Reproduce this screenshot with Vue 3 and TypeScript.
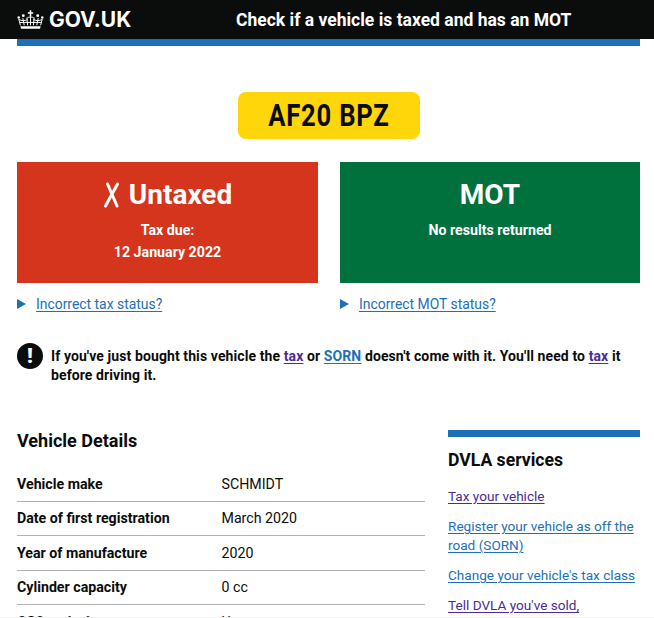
<script setup lang="ts">
interface Detail {
  label: string
  value: string
}

interface ServiceLink {
  text: string
  visited: boolean
}

const details: Detail[] = [
  { label: 'Vehicle make', value: 'SCHMIDT' },
  { label: 'Date of first registration', value: 'March 2020' },
  { label: 'Year of manufacture', value: '2020' },
  { label: 'Cylinder capacity', value: '0 cc' },
  { label: 'CO2 emissions', value: 'Use a new message' }
]

const services: ServiceLink[] = [
  { text: 'Tax your vehicle', visited: true },
  { text: 'Register your vehicle as off the road (SORN)', visited: false },
  { text: "Change your vehicle's tax class", visited: false },
  { text: "Tell DVLA you've sold, transferred or bought a vehicle", visited: true }
]
</script>

<template>
  <div class="page">
    <header class="topbar">
      <div class="logo">
        <svg class="crown" viewBox="0 0 28 20" aria-hidden="true">
          <path
            fill="none"
            stroke="#fff"
            stroke-width="1"
            d="M3.500 15.500 1.800 9M24.500 15.500 26.200 9M7.500 15.500 6 8M20.500 15.500 22 8M11 15.500l-.8-8M17 15.500l.8-8M14 15.500V6M3 12.500h22M2 9.500c3 1.500 6 1.500 9 0M17 9.500c3 1.500 6 1.500 9 0M10.500 8c1-1.500 6-1.500 7 0"
          />
          <path fill="#fff" d="M13.200 0h1.600v2h2v1.500h-2V6h-1.600V3.500h-2V2h2zM3.500 16.500h21l-.6 2.500H4.100z" />
          <circle cx="6.500" cy="5.500" r="1.500" fill="#fff" />
          <circle cx="21.500" cy="5.500" r="1.500" fill="#fff" />
          <circle cx="1.800" cy="7.500" r="1.300" fill="#fff" />
          <circle cx="26.200" cy="7.500" r="1.300" fill="#fff" />
        </svg>
        <span>GOV.UK</span>
      </div>
      <div class="service-name">Check if a vehicle is taxed and has an MOT</div>
    </header>

    <main class="content">
      <div class="blue-rule"></div>

      <div class="plate-wrap">
        <div class="plate"><span>AF20 BPZ</span></div>
      </div>

      <div class="status-grid">
        <section class="status-col">
          <div class="status-card red">
            <h2>
              <svg class="cross" viewBox="0 0 18 26" aria-hidden="true">
                <path fill="none" stroke="#fff" stroke-width="3" stroke-linecap="round" d="M4.500 2 14 24M14.500 2 2.500 24" />
              </svg>
              Untaxed
            </h2>
            <p>Tax due:</p>
            <p>12 January 2022</p>
          </div>
          <div class="status-link">
            <span class="arrow"></span>
            <a href="#">Incorrect tax status?</a>
          </div>
        </section>
        <section class="status-col">
          <div class="status-card green">
            <h2>MOT</h2>
            <p>No results returned</p>
          </div>
          <div class="status-link">
            <span class="arrow"></span>
            <a href="#">Incorrect MOT status?</a>
          </div>
        </section>
      </div>

      <div class="warning">
        <span class="warning-icon">!</span>
        <p>
          If you've just bought this vehicle the <a href="#" class="visited">tax</a> or
          <a href="#">SORN</a> doesn't come with it. You'll need to
          <a href="#" class="visited">tax</a> it before driving it.
        </p>
      </div>

      <div class="lower">
        <section class="details">
          <h2>Vehicle Details</h2>
          <dl>
            <div v-for="row in details" :key="row.label" class="detail-row">
              <dt>{{ row.label }}</dt>
              <dd>{{ row.value }}</dd>
            </div>
          </dl>
        </section>
        <aside class="sidebar">
          <h2>DVLA services</h2>
          <ul>
            <li v-for="link in services" :key="link.text">
              <a href="#" :class="{ visited: link.visited }">{{ link.text }}</a>
            </li>
          </ul>
        </aside>
      </div>
    </main>

    <div class="bottom-edge"></div>
  </div>
</template>

<style>
html,
body {
  margin: 0;
  overflow: hidden;
  background: #fff;
}
</style>

<style scoped>
.page {
  position: relative;
  width: 654px;
  height: 618px;
  overflow: hidden;
  font-family: Roboto, "Liberation Sans", sans-serif;
  color: #0b0c0c;
  background: #fff;
}

.topbar {
  display: flex;
  align-items: center;
  height: 39px;
  padding-left: 17px;
  background: #0b0c0c;
  color: #fff;
}

.logo {
  display: flex;
  align-items: center;
  gap: 5px;
  width: 219px;
  font-family: Inter, sans-serif;
  font-size: 21px;
  font-weight: 700;
}

.crown {
  width: 27px;
  height: 20px;
}

.service-name {
  font-size: 17.500px;
  font-weight: 700;
  white-space: nowrap;
}

.content {
  padding: 0 14px 0 17px;
}

.blue-rule {
  height: 7px;
  background: #1d70b8;
}

.plate-wrap {
  display: flex;
  justify-content: center;
  padding: 46px 0 23px;
}

.plate {
  width: 182px;
  height: 47px;
  border-radius: 8px;
  background: #ffd60a;
  color: #0b0c0c;
  font-size: 32px;
  font-weight: 700;
  line-height: 47px;
  letter-spacing: 1px;
  text-align: center;
}

.plate span {
  display: inline-block;
  transform: scaleX(0.8);
  white-space: nowrap;
}

.status-grid {
  display: grid;
  grid-template-columns: 301px 300px;
  column-gap: 22px;
}

.status-card {
  display: flex;
  flex-direction: column;
  align-items: center;
  height: 121px;
  padding-top: 16px;
  box-sizing: border-box;
  color: #fff;
  text-align: center;
}

.status-card.red {
  background: #d4351c;
}

.status-card.green {
  background: #00703c;
}

.status-card h2 {
  display: flex;
  align-items: center;
  gap: 8px;
  margin: 0 0 7px;
  font-size: 28px;
  line-height: 34px;
  font-weight: 700;
}

.status-card p {
  margin: 0;
  font-size: 14.200px;
  font-weight: 700;
  line-height: 22px;
}

.cross {
  width: 18px;
  height: 26px;
}

.status-link {
  display: flex;
  align-items: center;
  gap: 10px;
  margin-top: 12px;
  padding-bottom: 1px;
  font-size: 13.900px;
  line-height: 18px;
}

.arrow {
  width: 0;
  height: 0;
  border-top: 5px solid transparent;
  border-bottom: 5px solid transparent;
  border-left: 9px solid #1d70b8;
}

a {
  color: #1d70b8;
  text-decoration: underline;
  text-underline-offset: 2px;
}

a.visited {
  color: #4c2c92;
}

.warning {
  display: flex;
  gap: 8px;
  margin-top: 29px;
  width: 623px;
}

.warning-icon {
  flex: none;
  width: 26px;
  height: 26px;
  border-radius: 50%;
  background: #0b0c0c;
  color: #fff;
  font-size: 21px;
  font-weight: 900;
  line-height: 26px;
  text-align: center;
}

.warning p {
  margin: 4px 0 0;
  font-size: 14px;
  font-weight: 700;
  line-height: 19px;
  letter-spacing: 0.1px;
}

.lower {
  display: grid;
  grid-template-columns: 408px 192px;
  column-gap: 23px;
  margin-top: 45px;
}

.details h2 {
  margin: 0 0 15px;
  font-size: 18px;
  line-height: 22px;
  font-weight: 700;
}

.details dl {
  margin: 0;
}

.detail-row {
  display: flex;
  align-items: center;
  height: 33.500px;
  border-bottom: 1px solid #b1b4b6;
  font-size: 14.200px;
}

.detail-row dt {
  width: 204.500px;
  font-weight: 700;
}

.detail-row dd {
  margin: 0;
}

.sidebar {
  border-top: 7px solid #1d70b8;
}

.sidebar h2 {
  margin: 12px 0 16px;
  font-size: 17.600px;
  line-height: 22px;
  font-weight: 700;
}

.sidebar ul {
  margin: 0;
  padding: 0;
  list-style: none;
}

.sidebar li {
  margin-bottom: 11px;
  font-size: 13.600px;
  line-height: 19px;
}

.bottom-edge {
  position: absolute;
  left: 0;
  right: 0;
  bottom: 0;
  height: 1px;
  background: #f3f3f3;
}
</style>
